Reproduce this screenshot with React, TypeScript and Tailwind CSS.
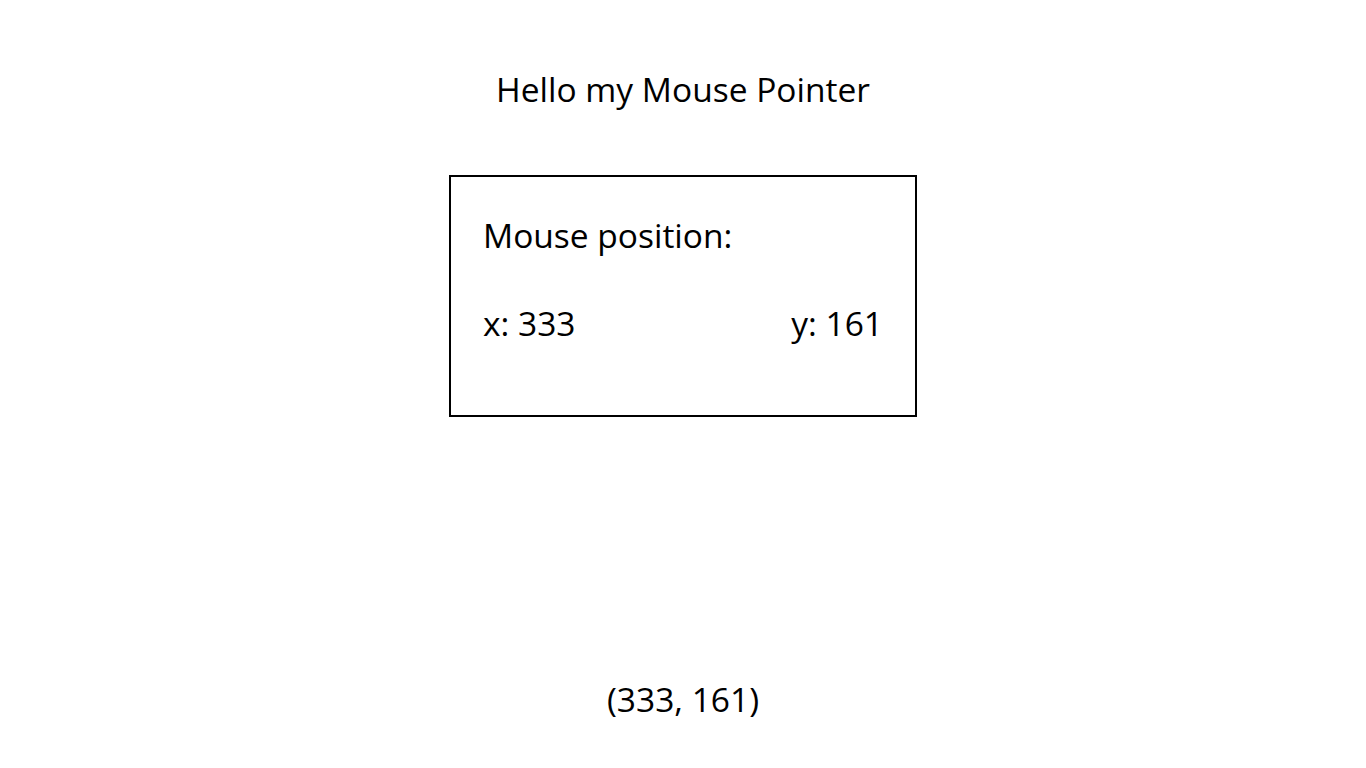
export default function App() {
  const x = 333;
  const y = 161;

  return (
    <div className="h-screen w-full bg-white text-black flex flex-col items-center font-['Open_Sans',sans-serif] text-[33.5px]">
      <h1 className="mt-[65px] h-[48px] leading-[48px] font-normal">Hello my Mouse Pointer</h1>
      <div className="mt-[62px] w-[468px] h-[242px] border-2 border-black px-[32px] pt-[34px]">
        <p className="leading-[48px]">Mouse position:</p>
        <div className="mt-[40px] flex justify-between leading-[48px]">
          <span>x: {x}</span>
          <span>y: {y}</span>
        </div>
      </div>
      <p className="mt-[258px] leading-[48px]">({x}, {y})</p>
    </div>
  );
}
